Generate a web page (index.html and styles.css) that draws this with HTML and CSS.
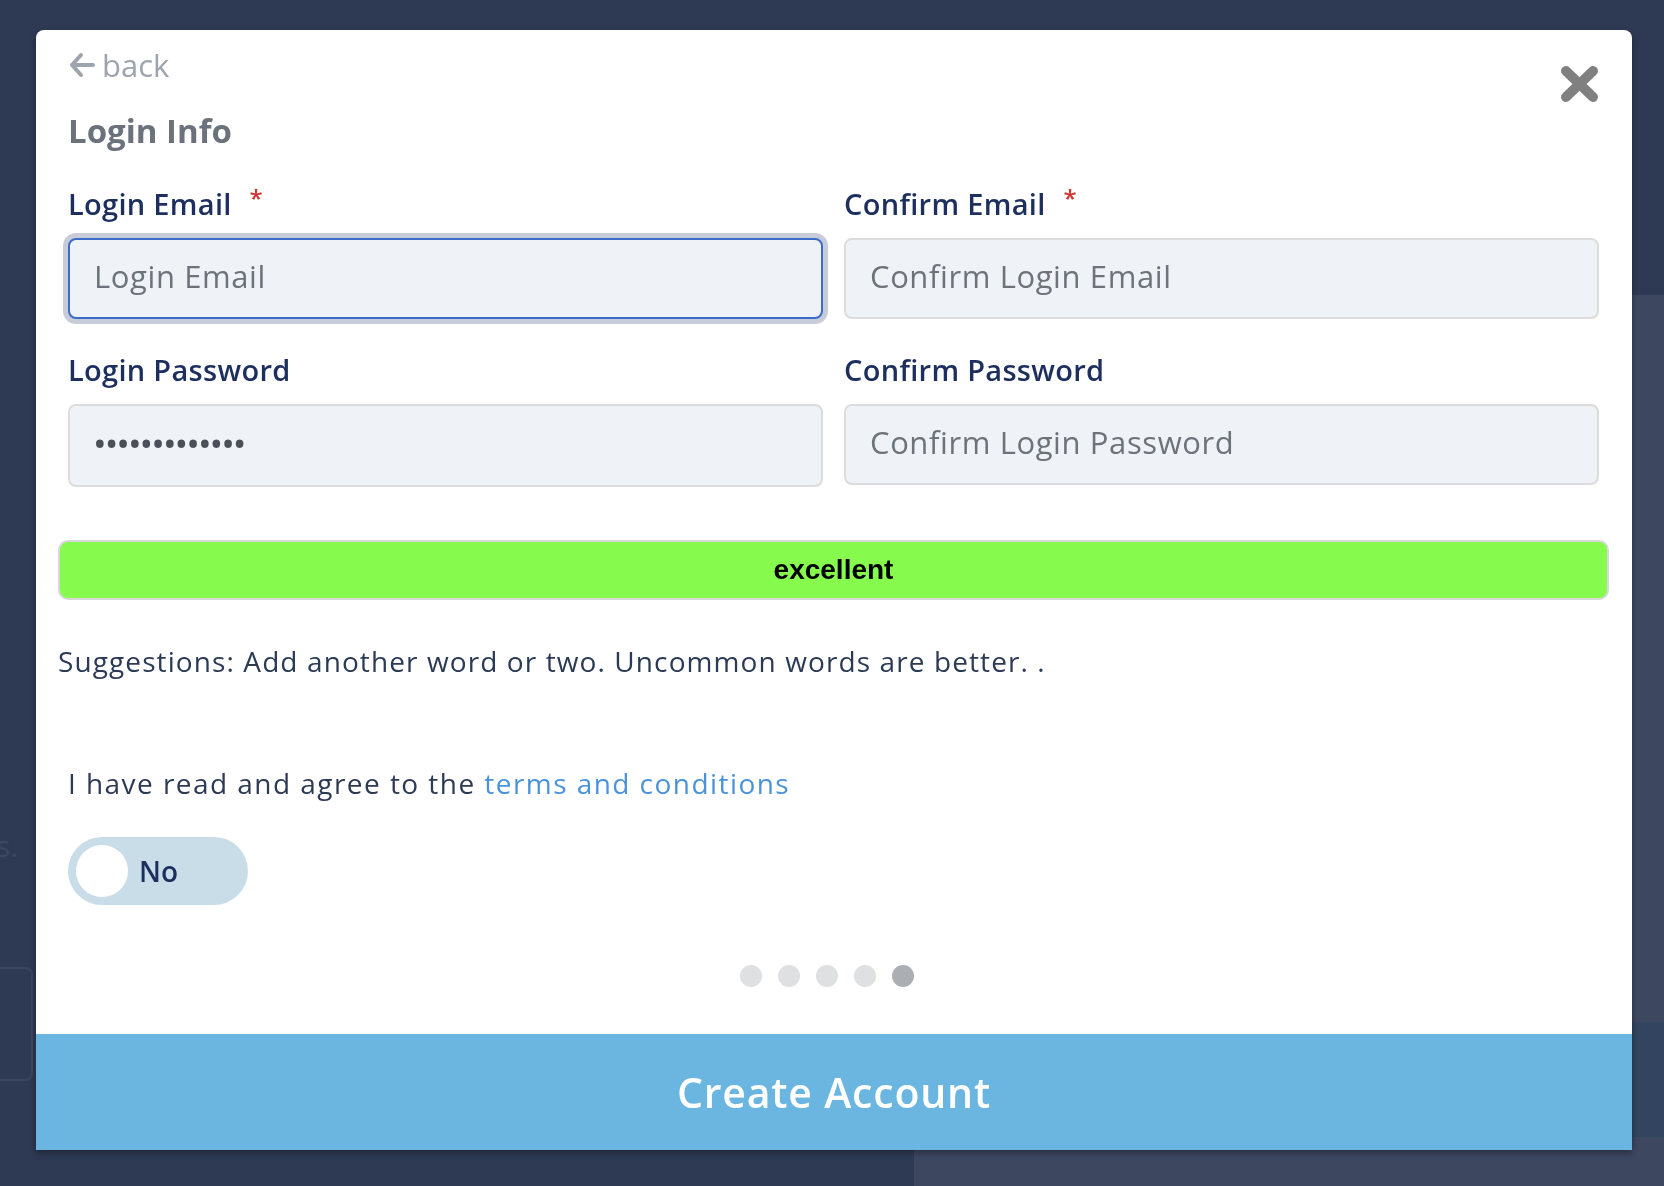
FILE: index.html
```html
<!DOCTYPE html>
<html lang="en">
<head>
  <meta charset="UTF-8">
  <meta name="viewport" content="width=device-width, initial-scale=1">
  <title>Create Account</title>
  <link rel="stylesheet" href="styles.css">
</head>
<body>
  <div class="page">
    <div class="page-top"></div>
    <div class="page-bottom">
      <div class="page-left">
        <p class="page-text">s.</p>
        <div class="page-box"></div>
      </div>
      <div class="page-right">
        <div class="page-band"></div>
      </div>
    </div>
  </div>

  <div class="modal">
    <button class="close-btn" aria-label="Close">
      <svg width="41" height="38" viewBox="0 0 41 38">
        <path d="M7 6 L34 32 M34 6 L7 32" stroke="#808080" stroke-width="10" stroke-linecap="round" fill="none"/>
      </svg>
    </button>

    <div class="modal-body">
      <a class="back-link" href="#">
        <svg width="28" height="28" viewBox="0 0 28 28">
          <path d="M13 4 L4 14 L13 24 M4 14 H25" stroke="#9ea4ae" stroke-width="4" stroke-linecap="round" stroke-linejoin="round" fill="none"/>
        </svg>
        back
      </a>

      <h2>Login Info</h2>

      <div class="field-grid">
        <div class="field">
          <label>Login Email <span class="req">*</span></label>
          <input type="email" class="focused" placeholder="Login Email">
        </div>
        <div class="field">
          <label>Confirm Email <span class="req">*</span></label>
          <input type="email" placeholder="Confirm Login Email">
        </div>
        <div class="field">
          <label>Login Password</label>
          <input type="password" class="pw" value="abcdefghijklm">
        </div>
        <div class="field">
          <label>Confirm Password</label>
          <input type="password" placeholder="Confirm Login Password">
        </div>
      </div>

      <div class="strength">excellent</div>

      <p class="suggestions">Suggestions: Add another word or two. Uncommon words are better. .</p>

      <p class="terms">I have read and agree to the <a href="#">terms and conditions</a></p>

      <div class="toggle">
        <span class="knob"></span>
        <span class="toggle-label">No</span>
      </div>

      <div class="dots">
        <span class="dot"></span>
        <span class="dot"></span>
        <span class="dot"></span>
        <span class="dot"></span>
        <span class="dot active"></span>
      </div>
    </div>

    <button class="create-btn">Create Account</button>
  </div>
</body>
</html>
```

FILE: styles.css
```css
* {
  box-sizing: border-box;
}
body {
  margin: 0;
  height: 100vh;
  overflow: hidden;
  background-color: #2e3a54;
  font-family: "Open Sans", Arial, sans-serif;
}

/* page behind the overlay */
.page {
  height: 100vh;
  display: grid;
  grid-template-rows: 295px 1fr;
}
.page-bottom {
  display: grid;
  grid-template-columns: 914px 1fr;
}
.page-left {
  display: flex;
  flex-direction: column;
}
.page-text {
  margin: 533px 0 0 -4px;
  font-size: 30px;
  line-height: 36px;
  color: #3c4760;
}
.page-box {
  margin: 103px 0 0 -20px;
  width: 53px;
  height: 114px;
  border: 2px solid #3a4660;
  border-radius: 8px;
}
.page-right {
  background-color: #3d4760;
  padding-top: 727px;
}
.page-band {
  height: 115px;
  background-color: #33445e;
}

/* modal */
.modal {
  position: fixed;
  top: 30px;
  left: 36px;
  width: 1596px;
  height: 1120px;
  background: #fff;
  border-radius: 8px 8px 0 0;
  box-shadow: 0 3px 6px rgba(0,0,0,0.35);
  display: flex;
  flex-direction: column;
}
.close-btn {
  position: absolute;
  top: 35px;
  right: 32px;
  padding: 0;
  border: none;
  background: none;
  cursor: pointer;
  line-height: 0;
}
.modal-body {
  flex: 1;
  padding: 17px 33px 0 32px;
}
.back-link {
  display: inline-flex;
  align-items: center;
  gap: 6px;
  height: 36px;
  font-size: 31px;
  color: #9ea4ae;
  text-decoration: none;
}
h2 {
  margin: 27px 0 0;
  font-size: 33px;
  line-height: 40px;
  font-weight: 700;
  color: #6c727b;
}

.field-grid {
  display: grid;
  grid-template-columns: 1fr 1fr;
  column-gap: 21px;
  row-gap: 34px;
  margin-top: 30px;
}
label {
  display: block;
  margin-bottom: 17px;
  font-size: 29px;
  line-height: 34px;
  font-weight: 600;
  letter-spacing: 0.3px;
  color: #1d2f5e;
}
.req {
  margin-left: 10px;
  font-size: 24px;
  vertical-align: 8px;
  color: #d2322d;
}
input {
  display: block;
  width: 100%;
  height: 81px;
  padding: 0 24px 6px;
  border: 2px solid #dcdcdc;
  border-radius: 8px;
  background-color: #eff2f6;
  font-family: inherit;
  font-size: 31px;
  letter-spacing: 0.6px;
  color: #4a4f58;
  outline: none;
}
input::placeholder {
  color: #6d737b;
}
input.focused {
  border-color: #3b6cc7;
  box-shadow: 0 0 0 5px #c8ccd8;
}
input.pw {
  height: 83px;
  letter-spacing: 0;
  font-weight: 600;
}

.strength {
  margin: 53px -10px 0;
  height: 60px;
  border: 2px solid #d8d8d8;
  border-radius: 10px;
  background-color: #86fb4e;
  font-family: "Liberation Sans", Arial, sans-serif;
  font-size: 28px;
  font-weight: bold;
  line-height: 56px;
  text-align: center;
  color: #000;
}
.suggestions {
  margin: 45px -10px 0;
  font-size: 28px;
  line-height: 32px;
  letter-spacing: 1.1px;
  color: #2b3a55;
}
.terms {
  margin: 90px 0 0;
  font-size: 28px;
  line-height: 32px;
  letter-spacing: 1.45px;
  color: #2d3a55;
}
.terms a {
  color: #4a93da;
  text-decoration: none;
}

.toggle {
  display: flex;
  align-items: center;
  gap: 11px;
  width: 180px;
  height: 68px;
  margin-top: 38px;
  padding-left: 8px;
  border-radius: 34px;
  background-color: #c9dde8;
}
.knob {
  width: 52px;
  height: 52px;
  border-radius: 50%;
  background: #fff;
}
.toggle-label {
  font-size: 28px;
  font-weight: 600;
  color: #1d2f5e;
}

.dots {
  display: flex;
  justify-content: center;
  gap: 16px;
  margin-top: 60px;
  padding-right: 14px;
}
.dot {
  width: 22px;
  height: 22px;
  border-radius: 50%;
  background-color: #dfe0e2;
}
.dot.active {
  background-color: #abaeb3;
}

.create-btn {
  height: 116px;
  border: none;
  background-color: #6ab6e0;
  font-family: inherit;
  font-size: 41px;
  font-weight: 600;
  letter-spacing: 0.8px;
  color: #fff;
  cursor: pointer;
}
```
